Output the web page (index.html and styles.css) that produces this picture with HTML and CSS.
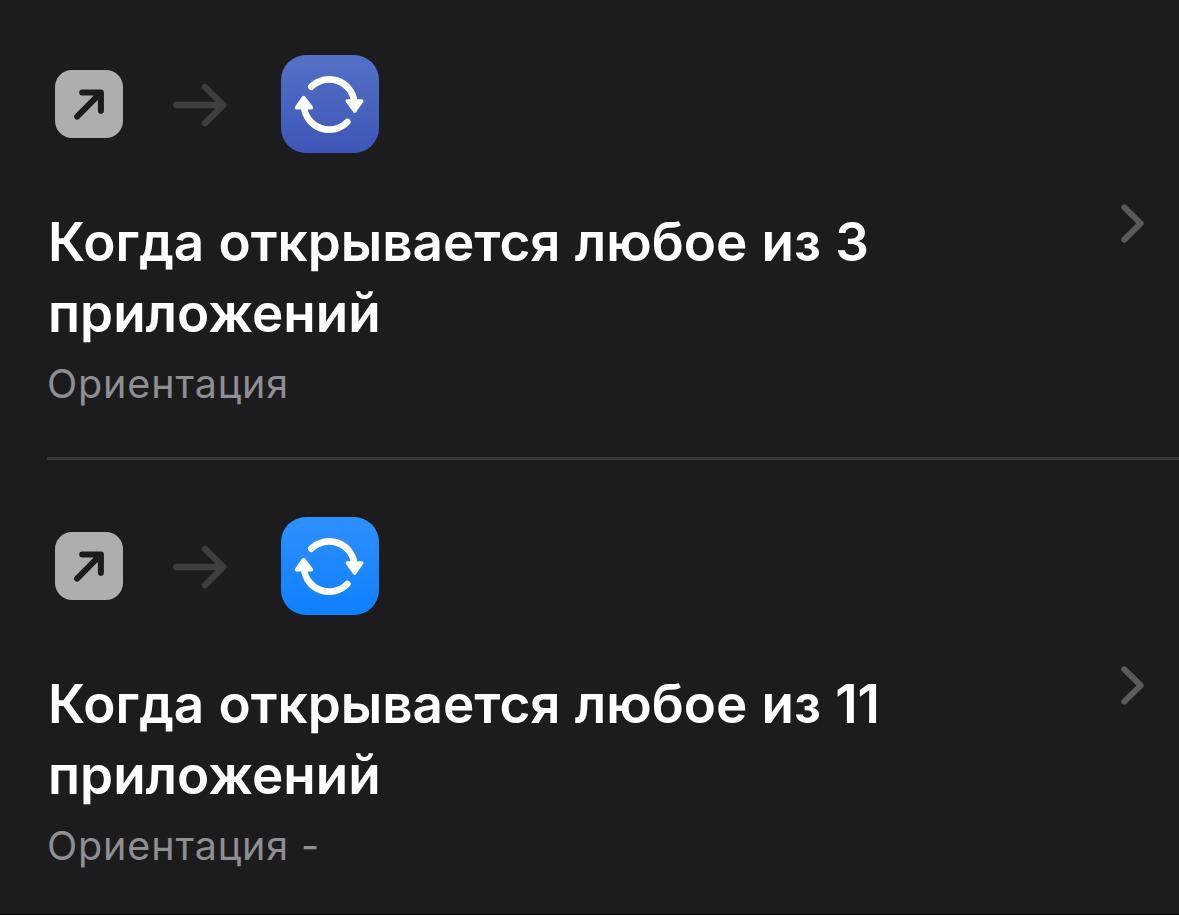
FILE: index.html
```html
<!DOCTYPE html>
<html lang="ru">
<head>
  <meta charset="UTF-8">
  <meta name="viewport" content="width=device-width, initial-scale=1.0">
  <title>Автоматизация</title>
  <link rel="stylesheet" href="styles.css">
</head>
<body>
  <main class="automations">
    <article class="automation">
      <div class="content">
        <div class="flow">
          <svg class="trigger" viewBox="46 90 203 203">
            <path d="M112 229L182 158M127 157H183V212"/>
          </svg>
          <svg class="arrow" viewBox="400 130 162 132">
            <path d="M410 196H550M496 142L551 196L496 251"/>
          </svg>
          <svg class="app indigo" viewBox="33 30 294 294">
            <path class="arc" d="M124 125A76 76 0 0 1 253 170M232 231A76 76 0 0 1 102 186"/>
            <path class="head" d="M232 168H275L254 198ZM80 188H124L101 158Z"/>
          </svg>
        </div>
        <h2>Когда открывается любое из 3 приложений</h2>
        <p>Ориентация</p>
      </div>
      <svg class="chevron" viewBox="90 40 75 123">
        <path d="M103 53L152 101L103 150"/>
      </svg>
    </article>

    <article class="automation">
      <div class="content">
        <div class="flow">
          <svg class="trigger" viewBox="46 90 203 203">
            <path d="M112 229L182 158M127 157H183V212"/>
          </svg>
          <svg class="arrow" viewBox="400 130 162 132">
            <path d="M410 196H550M496 142L551 196L496 251"/>
          </svg>
          <svg class="app blue" viewBox="33 30 294 294">
            <path class="arc" d="M124 125A76 76 0 0 1 253 170M232 231A76 76 0 0 1 102 186"/>
            <path class="head" d="M232 168H275L254 198ZM80 188H124L101 158Z"/>
          </svg>
        </div>
        <h2>Когда открывается любое из 11 приложений</h2>
        <p>Ориентация -</p>
      </div>
      <svg class="chevron" viewBox="90 40 75 123">
        <path d="M103 53L152 101L103 150"/>
      </svg>
    </article>
  </main>
</body>
</html>
```
FILE: styles.css
```css
* {
  box-sizing: border-box;
  margin: 0;
  padding: 0;
}
body {
  font-family: Inter, "Liberation Sans", sans-serif;
  background: #1c1c1e;
  color: #fff;
}
.automations {
  height: 915px;
  overflow: hidden;
  border-bottom: 1px solid #000;
}
.automation {
  display: flex;
  justify-content: space-between;
  height: 457px;
  margin-left: 47px;
  padding: 55px 34px 0 0;
}
.automation + .automation {
  height: 462px;
  padding-top: 57px;
  border-top: 3px solid #363638;
}
.content {
  width: 900px;
}
svg {
  display: block;
  flex: none;
  fill: none;
  stroke-linecap: round;
  stroke-linejoin: round;
}
/* Иконки: триггер, стрелка, приложение */
.flow {
  display: flex;
  align-items: center;
  height: 98px;
  margin-bottom: 54px;
  padding-left: 8px;
}
.trigger {
  width: 68px;
  height: 68px;
  border-radius: 17px;
  background: #aeaeb2;
  stroke: #1c1c1e;
  stroke-width: 18;
}
.arrow {
  width: 54px;
  height: 44px;
  margin: 2px 54px 0 50px;
  stroke: #3e3e40;
  stroke-width: 19;
}
.app {
  width: 98px;
  height: 98px;
  border-radius: 25px;
  stroke: #fff;
}
.app .arc {
  stroke-width: 20;
}
.app .head {
  fill: #fff;
  stroke-width: 11;
}
.indigo {
  background: linear-gradient(#5470c6, #3d56b8);
}
.blue {
  background: linear-gradient(#2f90ff, #0f7fff);
}
h2 {
  padding-left: 1px;
  font-size: 53px;
  font-weight: 600;
  line-height: 71px;
  word-spacing: 0.8px;
}
p {
  font-size: 39.5px;
  line-height: 71px;
  letter-spacing: 0.85px;
  color: #8e8e93;
}
.chevron {
  width: 25px;
  height: 41px;
  margin-top: 148px;
  stroke: #5a5a5e;
  stroke-width: 18;
}
```
